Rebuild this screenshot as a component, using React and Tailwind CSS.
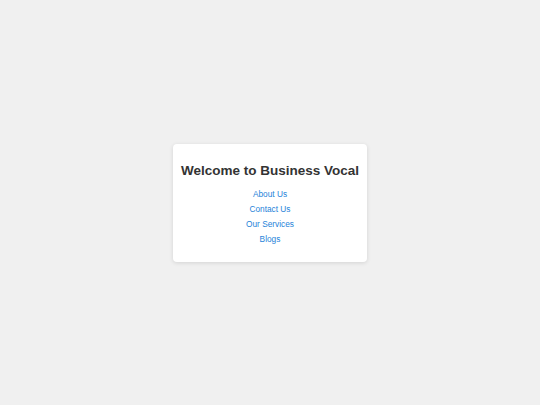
const links = ['About Us', 'Contact Us', 'Our Services', 'Blogs'];

export default function App() {
    return (
        <div className="min-h-screen bg-[#f0f0f0] flex items-center justify-center font-['Liberation_Sans',Arial,sans-serif]">
            {/* Card */}
            <div className="bg-white rounded-[4px] shadow-[0_1px_4px_rgba(0,0,0,0.12)] px-2 pt-[19px] pb-[15px] text-center">
                <h1 className="text-[13.5px] leading-[16px] font-bold text-[#333] whitespace-nowrap">
                    Welcome to Business Vocal
                </h1>
                <ul className="mt-2">
                    {links.map((label) => (
                        <li key={label} className="text-[8.3px] leading-[15px]">
                            <a href="#" className="text-[#2683d9]">
                                {label}
                            </a>
                        </li>
                    ))}
                </ul>
            </div>
        </div>
    );
}
